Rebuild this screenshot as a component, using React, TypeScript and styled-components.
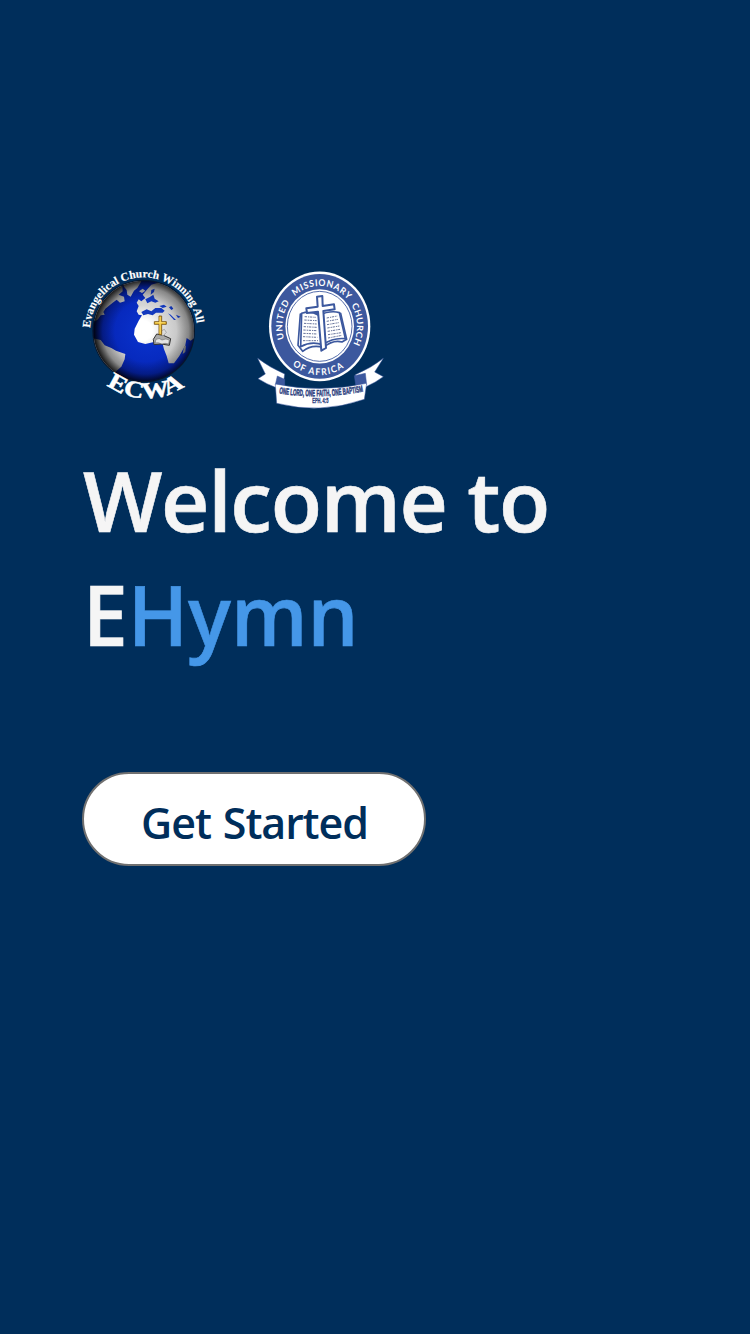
import React from 'react';
import styled, { createGlobalStyle } from 'styled-components';

const GlobalStyle = createGlobalStyle`
  body { margin: 0; background: #002e5b; }
`;

const Screen = styled.main`
  box-sizing: border-box;
  min-height: 1334px;
  padding: 262px 74px 0;
  background: #002e5b;
  font-family: 'Open Sans', 'Noto Sans', sans-serif;
  font-weight: 600;
`;

const Logos = styled.div`
  display: flex;
  align-items: flex-start;
  gap: 36px;
  height: 152px;
`;

const Logo = styled.svg`
  flex: none;
  display: block;
`;

const Title = styled.h1`
  margin: 29px 0 0 9px;
  font-size: 84px;
  line-height: 114px;
  font-weight: 600;
  color: #f5f5f5;
`;

const Line = styled.span<{ $spacing: number; $stretch?: number }>`
  display: block;
  white-space: nowrap;
  letter-spacing: ${(p) => p.$spacing}px;
  transform: scaleX(${(p) => p.$stretch ?? 1});
  transform-origin: left;
  -webkit-text-stroke: 0.6px;
`;

const Accent = styled.span`
  color: #4597e8;
  letter-spacing: 0;
`;

const StartButton = styled.button`
  box-sizing: border-box;
  display: flex;
  align-items: center;
  justify-content: center;
  width: 344px;
  height: 94px;
  margin: 101px 0 0 8px;
  padding: 6px 0 0 1px;
  border: 2px solid #707070;
  border-radius: 47px;
  background: #fff;
  color: #002e5b;
  font: 600 43px/1 'Open Sans', 'Noto Sans', sans-serif;
  letter-spacing: -1.1px;
  word-spacing: 2px;
  white-space: nowrap;
`;

const GlobeLogo = () => (
  <Logo width="140" height="146" viewBox="0 0 420 438">
    <defs>
      <radialGradient id="shade" cx="0.52" cy="0.5" r="0.5">
        <stop offset="0.6" stopColor="#000" stopOpacity="0" />
        <stop offset="0.84" stopColor="#000" stopOpacity="0.28" />
        <stop offset="1" stopColor="#000" stopOpacity="0.85" />
      </radialGradient>
      <radialGradient id="sea" cx="0.55" cy="0.5" r="0.5">
        <stop offset="0" stopColor="#0a34d0" />
        <stop offset="1" stopColor="#0524b4" />
      </radialGradient>
      <radialGradient id="land" gradientUnits="userSpaceOnUse" cx="205" cy="205" r="150">
        <stop offset="0.2" stopColor="#fff" />
        <stop offset="0.5" stopColor="#d6d6d6" />
        <stop offset="1" stopColor="#b4b4b4" />
      </radialGradient>
      <clipPath id="disc"><circle cx="209" cy="207" r="151" /></clipPath>
      <path id="nameArc" d="M48 206A161 160 0 0 1 370 206" />
      <path id="ecwaArc" d="M44 308A199 199 0 0 0 390 308" />
    </defs>
    <circle cx="209" cy="207" r="154" fill="#07182c" />
    <g clipPath="url(#disc)">
      <circle cx="209" cy="207" r="151" fill="url(#sea)" />
      <g fill="url(#land)">
        <path d="M55 170L68 130L92 98L125 72L145 72L146 88L134 98L150 104L152 118L138 122L128 113L116 122L104 132L94 140L88 150L92 158L80 160L72 172L64 178Z" />
        <path d="M145 60L180 55L202 58L190 78L180 86L170 104L160 98L158 84L150 74Z" />
        <path d="M195 88L206 80L214 86L204 93Z" />
        <path d="M188 148L194 132L188 122L194 112L202 118L214 108L206 98L218 84L232 68L252 62L280 72L320 100L348 144L363 180L364 226L350 236L338 228L334 250L316 282L300 304L284 304L278 282L270 262L266 246L240 240L214 246L192 240L180 218L182 200L194 176L204 160L194 158Z" />
        <path d="M55 228L80 234L92 250L112 258L126 266L154 276L152 292L142 314L128 326L118 340L84 320L58 280Z" />
        <path d="M330 254L336 250L334 270L326 276Z" fill="#999" />
      </g>
      <g fill="#1238bd">
        <path d="M202 150L218 142L232 148L244 138L262 138L272 146L266 152L246 152L236 160L222 156L208 160Z" />
        <path d="M214 112L226 106L238 98L242 110L254 118L244 122L232 118L220 124Z" />
        <path d="M232 84L242 80L240 90L230 98Z" />
        <path d="M256 132L270 128L278 134L266 138Z" />
        <path d="M285 136L292 132L298 140L292 144Z" />
        <path d="M282 154L290 158L306 174L300 174Z" />
        <path d="M306 158L320 164L312 168Z" />
      </g>
      <circle cx="209" cy="207" r="154" fill="url(#shade)" />
    </g>
    <path d="M238 232L248 216L268 220L290 230L286 250L262 246L240 248Z" fill="#aaa" stroke="#333" strokeWidth="3" />
    <path d="M246 232Q256 226 264 234Q276 228 286 234L284 246Q272 242 264 246Q252 240 243 243Z" fill="#e4e4e4" stroke="#555" strokeWidth="1.5" />
    <path d="M263 206L271 202L277 211L267 222L260 217Z" fill="#ddd" stroke="#777" strokeWidth="1.5" />
    <path d="M255 162H263V179H277V187H263V218H255V187H241V179H255Z" fill="#f1c232" stroke="#76510d" strokeWidth="2.5" />
    <path d="M258 165V215M244 182H274" stroke="#ffe68a" strokeWidth="2" />
    <g fill="#fff" stroke="#fff" fontFamily="'Liberation Serif', serif">
      <text fontSize="34" strokeWidth="0.5"><textPath href="#nameArc" startOffset="8" textLength="474" lengthAdjust="spacingAndGlyphs">Evangelical Church Winning All</textPath></text>
      <text fontSize="70" strokeWidth="1.5" fontWeight="700"><textPath href="#ecwaArc" startOffset="82" textLength="250" lengthAdjust="spacingAndGlyphs">ECWA</textPath></text>
    </g>
  </Logo>
);

const SealLogo = () => (
  <Logo width="142" height="152" viewBox="0 0 426 456">
    <defs>
      <path id="ringTop" d="M112 237A112 112 0 1 1 306 237" />
      <path id="ringBottom" d="M92 248.5A135 135 0 0 0 326 248.5" />
      <path id="motto" d="M84 394Q212 414 344 388" />
    </defs>
    <g transform="translate(0 -2.8) scale(1 1.082)">
      <circle cx="209" cy="181" r="152" fill="#fff" />
      <circle cx="209" cy="181" r="145" fill="#3c589e" />
      <circle cx="209" cy="181" r="103" fill="#fff" />
      <circle cx="209" cy="181" r="97" fill="none" stroke="#3c589e" strokeWidth="2.5" />
      <g fill="#fff" fontFamily="Lato, sans-serif" fontWeight="700" fontSize="26">
        <text><textPath href="#ringTop" startOffset="23" textLength="107">UNITED</textPath></text>
        <text><textPath href="#ringTop" startOffset="152" textLength="178">MISSIONARY</textPath></text>
        <text><textPath href="#ringTop" startOffset="348" textLength="113">CHURCH</textPath></text>
        <text><textPath href="#ringBottom" startOffset="54" textLength="164">OF AFRICA</textPath></text>
      </g>
    </g>
    <g stroke="#3c589e" strokeWidth="5" strokeLinejoin="round" fill="#fff">
      <path d="M151 156L144 250L158 268Q184 246 220 256Q250 232 276 240L290 232L272 154Z" />
      <path d="M155 154Q182 144 206 160L218 248Q184 236 152 254Z" />
      <path d="M206 160Q242 144 268 152L286 230Q250 226 218 248Z" />
    </g>
    <g stroke="#66739b" strokeWidth="3" strokeDasharray="7 3 4 2">
      <path d="M164 164L198 166M163 174L200 176M162 184L200 186M161 194L200 196M160 204L200 206M160 214L200 216M159 224L202 226M159 236L204 236M230 168L262 162M230 178L264 172M231 188L266 182M232 198L268 192M233 208L270 202M234 218L274 212M234 228L276 220" />
    </g>
    <path d="M201 104L217 102L218 132L252 127L254 142L220 147L228 258L214 266L204 149L171 153L169 139L203 134Z" fill="#fff" stroke="#3c589e" strokeWidth="6" strokeLinejoin="round" />
    <g fill="#fff" stroke="#3c589e" strokeWidth="1.5" strokeLinejoin="round">
      <path d="M23 289Q58 316 104 336L98 380L76 376Q50 366 24 350L46 336Z" />
      <path d="M400 289Q364 318 316 338L322 378L348 374Q376 362 400 344L374 330Z" />
      <path d="M82 342L104 352L104 374L76 368Z" fill="#3c589e" />
      <path d="M313 341L346 334L350 368L318 374Z" fill="#3c589e" />
      <path d="M76 366Q212 394 350 364L343 412Q212 458 80 424Z" />
    </g>
    <g fill="#2f437f" stroke="#2f437f" strokeWidth="1.6" fontFamily="'Liberation Sans', sans-serif" fontWeight="700">
      <text fontSize="27"><textPath href="#motto" startOffset="3" textLength="254" lengthAdjust="spacingAndGlyphs">ONE LORD, ONE FAITH, ONE BAPTISM</textPath></text>
      <text x="187" y="424" fontSize="19" strokeWidth="1" textLength="48" lengthAdjust="spacingAndGlyphs">EPH. 4:5</text>
    </g>
  </Logo>
);

export default function App() {
  return (
    <>
      <GlobalStyle />
      <Screen>
        <Logos>
          <GlobeLogo />
          <SealLogo />
        </Logos>
        <Title>
          <Line $spacing={-1.3}>Welcome to</Line>
          <Line $spacing={0} $stretch={0.955}>E<Accent>Hymn</Accent></Line>
        </Title>
        <StartButton type="button">Get Started</StartButton>
      </Screen>
    </>
  );
}
